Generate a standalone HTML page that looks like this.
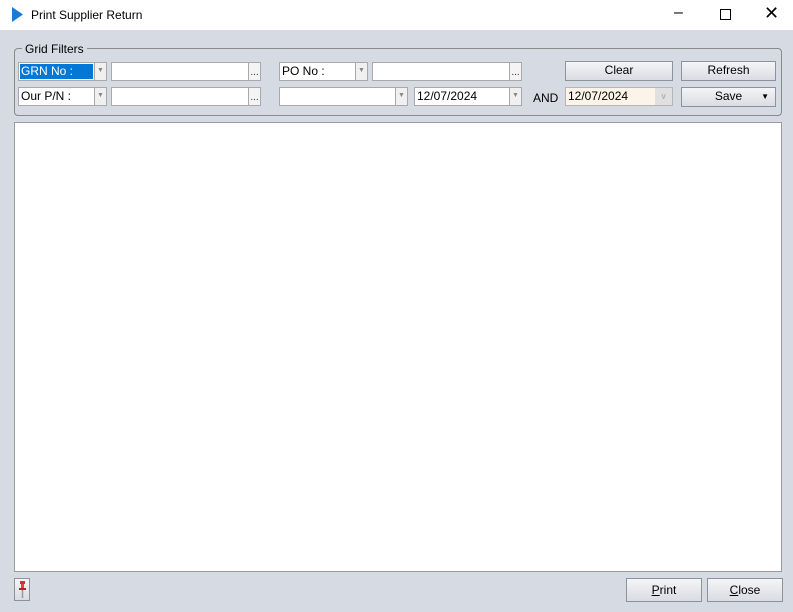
<!DOCTYPE html><html><head><style>
body{margin:0;width:793px;height:612px;overflow:hidden;background:#d6dae2;font-family:"Liberation Sans",sans-serif;font-size:12px;position:relative}
.a{position:absolute;box-sizing:border-box}
.tb{background:#fff;border:1px solid #a9a9a9}
.ar{background:#f0f0f0;border:1px solid #a9a9a9;color:#888;font-size:7px;text-align:center;line-height:16px}
.btn{background:linear-gradient(#f4f5f7,#d9dce2);border:1px solid #8e939b;text-align:center;line-height:17px;color:#000}
.el{background:#f4f4f4;border:1px solid #a9a9a9;font-size:10px;text-align:center;line-height:20px;color:#333}
.t{line-height:17px;padding-left:2px}
</style></head><body>
<div class="a" style="left:0;top:0;width:793px;height:30px;background:#fff"></div>
<svg class="a" style="left:12px;top:7px" width="12" height="15"><polygon points="0,0 11,7.5 0,15" fill="#1a7ad6"/></svg>
<div class="a" style="left:31px;top:8px;font-size:12px">Print Supplier Return</div>
<div class="a" style="left:674px;top:4px;font-size:16px">&#8211;</div>
<div class="a" style="left:720px;top:9px;width:11px;height:11px;border:1px solid #000"></div>
<div class="a" style="left:764px;top:3px;font-size:18px">&#10005;</div>
<div class="a" style="left:14px;top:48px;width:768px;height:68px;border:1px solid #8a8a8a;border-radius:4px"></div>
<div class="a" style="left:22px;top:42px;background:#d6dae2;padding:0 3px">Grid Filters</div>

<div class="a tb" style="left:18px;top:62px;width:77px;height:19px"><span class="a" style="left:1px;top:1px;width:73px;height:15px;background:#0078d7;color:#fff;line-height:15px;padding-left:1px">GRN No :</span></div>
<div class="a ar" style="left:94px;top:62px;width:13px;height:19px">▼</div>
<div class="a tb" style="left:111px;top:62px;width:138px;height:19px"></div><div class="a el" style="left:248px;top:62px;width:13px;height:19px">...</div>
<div class="a tb t" style="left:279px;top:62px;width:77px;height:19px">PO No :</div>
<div class="a ar" style="left:355px;top:62px;width:13px;height:19px">▼</div>
<div class="a tb" style="left:372px;top:62px;width:138px;height:19px"></div><div class="a el" style="left:509px;top:62px;width:13px;height:19px">...</div>
<div class="a btn" style="left:565px;top:61px;width:108px;height:20px">Clear</div>
<div class="a btn" style="left:681px;top:61px;width:95px;height:20px">Refresh</div>

<div class="a tb t" style="left:18px;top:87px;width:77px;height:19px">Our P/N :</div>
<div class="a ar" style="left:94px;top:87px;width:13px;height:19px">▼</div>
<div class="a tb" style="left:111px;top:87px;width:138px;height:19px"></div><div class="a el" style="left:248px;top:87px;width:13px;height:19px">...</div>
<div class="a tb" style="left:279px;top:87px;width:117px;height:19px"></div>
<div class="a ar" style="left:395px;top:87px;width:13px;height:19px">▼</div>
<div class="a tb t" style="left:414px;top:87px;width:96px;height:19px">12/07/2024</div>
<div class="a ar" style="left:509px;top:87px;width:13px;height:19px">▼</div>
<div class="a" style="left:533px;top:91px">AND</div>
<div class="a tb t" style="left:565px;top:87px;width:108px;height:19px;background:#fcf4e8;border-color:#b5b5b5">12/07/2024</div>
<div class="a" style="left:655px;top:88px;width:17px;height:17px;background:#e0e0e0;color:#aaa;font-size:9px;text-align:center;line-height:17px">&#8744;</div>
<div class="a btn" style="left:681px;top:87px;width:95px;height:20px">Save<span style="position:absolute;right:6px;font-size:8px">▼</span></div>

<div class="a" style="left:14px;top:122px;width:768px;height:450px;background:#fff;border:1px solid #9a9a9a"></div>
<div class="a btn" style="left:14px;top:578px;width:16px;height:23px"><svg style="position:absolute;left:3px;top:2px" width="9" height="18"><rect x="2" y="0" width="5" height="3" fill="#c33"/><rect x="3" y="3" width="3" height="4" fill="#d44"/><rect x="1" y="7" width="7" height="2" fill="#b22"/><line x1="4.5" y1="9" x2="4.5" y2="17" stroke="#999" stroke-width="1.5"/></svg></div>
<div class="a btn" style="left:626px;top:578px;width:76px;height:24px;line-height:22px"><u>P</u>rint</div>
<div class="a btn" style="left:707px;top:578px;width:76px;height:24px;line-height:22px"><u>C</u>lose</div>
</body></html>
